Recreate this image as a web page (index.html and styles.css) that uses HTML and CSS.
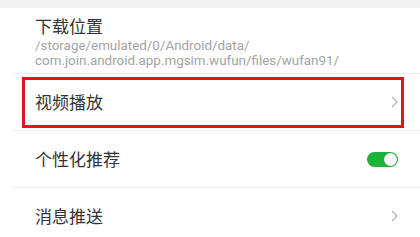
FILE: index.html
```html
<!DOCTYPE html>
<html lang="zh-CN">
  <head>
    <meta charset="UTF-8" />
    <meta name="viewport" content="width=device-width, initial-scale=1.0" />
    <title>设置</title>
    <link rel="stylesheet" href="styles.css">
  </head>
  <body>
    <div class="top-gap"></div>

    <!-- Settings list -->
    <div class="settings-list">
      <div class="setting-item setting-item-tall">
        <div class="setting-text">
          <div class="setting-title">下载位置</div>
          <div class="setting-desc">/storage/emulated/0/Android/data/<br>com.join.android.app.mgsim.wufun/files/wufan91/</div>
        </div>
      </div>

      <div class="setting-item highlighted">
        <div class="setting-title">视频播放</div>
        <svg class="chevron" width="7" height="12" viewBox="0 0 7 12">
          <polyline points="1,1 6,6 1,11" fill="none" stroke="#b5b5b5" stroke-width="1.3" />
        </svg>
      </div>

      <div class="setting-item">
        <div class="setting-title">个性化推荐</div>
        <div class="toggle toggle-on"><span class="knob"></span></div>
      </div>

      <div class="setting-item">
        <div class="setting-title">消息推送</div>
        <svg class="chevron" width="7" height="12" viewBox="0 0 7 12">
          <polyline points="1,1 6,6 1,11" fill="none" stroke="#b5b5b5" stroke-width="1.3" />
        </svg>
      </div>
    </div>
  </body>
</html>
```

FILE: styles.css
```css
* {
  margin: 0;
  padding: 0;
  box-sizing: border-box;
}

body {
  font-family: Roboto, "Noto Sans CJK SC", sans-serif;
  background-color: #ffffff;
  width: 420px;
  overflow: hidden;
}

.top-gap {
  height: 8px;
  background: #f3f3f3;
}

.settings-list {
  padding-left: 12px;
}

.setting-item {
  position: relative;
  display: flex;
  align-items: center;
  justify-content: space-between;
  height: 57px;
  padding: 0 22px 0 23px;
  border-bottom: 1px solid #eeeeee;
}

.setting-item-tall {
  height: 66px;
  align-items: flex-start;
  padding-top: 6px;
}

.setting-title {
  font-family: "Noto Sans CJK SC", sans-serif;
  font-size: 17px;
  line-height: 24px;
  color: #333333;
}

.setting-desc {
  font-size: 13.4px;
  line-height: 15px;
  color: #a3a3a3;
}

/* red highlight frame around the row */
.highlighted::after {
  content: "";
  position: absolute;
  left: 10px;
  right: 16px;
  top: 3px;
  bottom: 2px;
  border: 3px solid #e3121b;
}

.chevron {
  display: block;
}

.toggle {
  position: relative;
  width: 31px;
  height: 15px;
  border-radius: 8px;
  background: #e0e0e0;
}

.toggle-on {
  background: #1fb23b;
}

.knob {
  position: absolute;
  top: 1px;
  right: 1px;
  width: 13px;
  height: 13px;
  border-radius: 50%;
  background: #ffffff;
  box-shadow: 0 0 1px rgba(0, 0, 0, 0.3);
}
```
